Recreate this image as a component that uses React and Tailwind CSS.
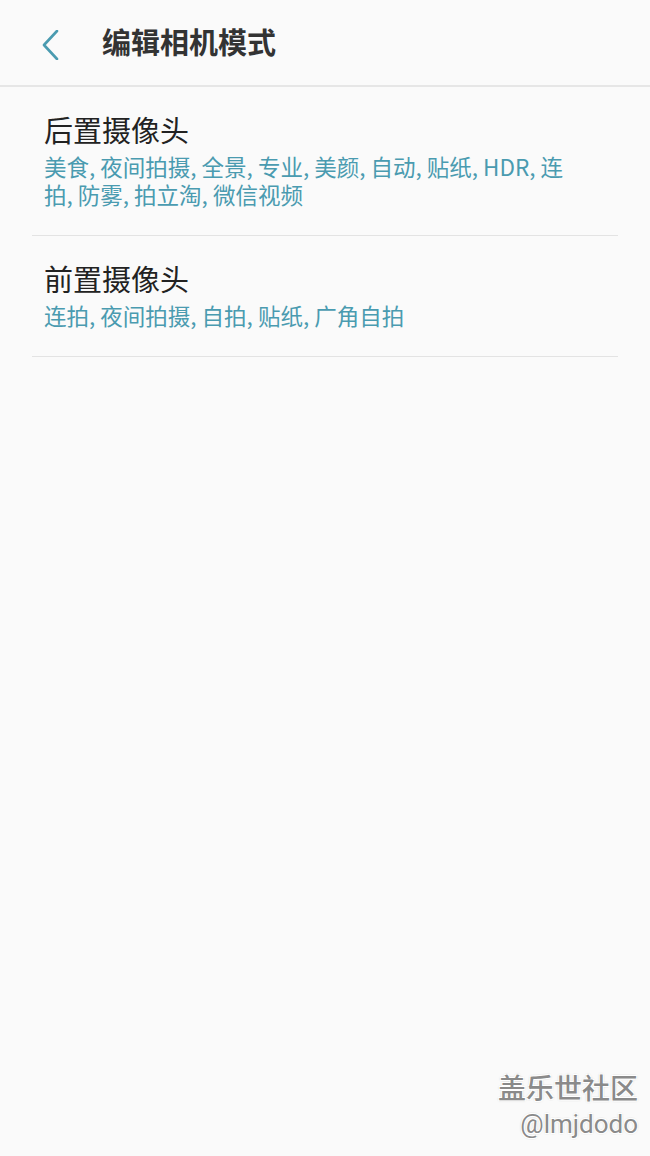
const rearModes = "美食, 夜间拍摄, 全景, 专业, 美颜, 自动, 贴纸, HDR, 连拍, 防雾, 拍立淘, 微信视频";
const frontModes = "连拍, 夜间拍摄, 自拍, 贴纸, 广角自拍";

const font = "font-['Roboto','Noto_Sans_CJK_SC',sans-serif]";

const ModeRow = ({ title, modes }) => (
  <div className="mx-8 border-b border-[#e3e3e3] pl-3 pr-10 pt-7 pb-[27px]">
    <div className="text-[29px] leading-[34px] text-[#222]">{title}</div>
    <div className="mt-[3px] font-['Noto_Sans_CJK_SC',sans-serif] text-[22.5px] leading-[28px] text-[#4a9bb0]">
      {modes}
    </div>
  </div>
);

export default function App() {
  return (
    <div className={`relative flex h-[1156px] w-[650px] flex-col bg-[#fafafa] ${font}`}>
      <header className="flex h-[87px] shrink-0 items-center border-b-2 border-[#e6e6e6] pt-[5px]">
        <button className="ml-[38px] flex h-10 w-6 items-center justify-center">
          <svg width="20" height="30" viewBox="0 0 20 30" fill="none">
            <polyline
              points="17,1 4,15 17,29"
              stroke="#4a9bb0"
              strokeWidth="2.6"
              strokeLinecap="round"
              strokeLinejoin="round"
            />
          </svg>
        </button>
        <h1 className="ml-[40px] text-[29px] font-bold text-[#333]">编辑相机模式</h1>
      </header>

      <ModeRow title="后置摄像头" modes={rearModes} />
      <ModeRow title="前置摄像头" modes={frontModes} />

      <div className="absolute right-[12px] bottom-[16px] flex flex-col items-end text-[#8a8a8a] [text-shadow:1px_1px_0_#fff,-1px_-1px_0_#fff,1px_-1px_0_#fff,-1px_1px_0_#fff,0_0_2px_#555]">
        <span className="text-[28px] font-medium leading-[36px]">盖乐世社区</span>
        <span className="text-[26px] leading-[32px]">@lmjdodo</span>
      </div>
    </div>
  );
}
